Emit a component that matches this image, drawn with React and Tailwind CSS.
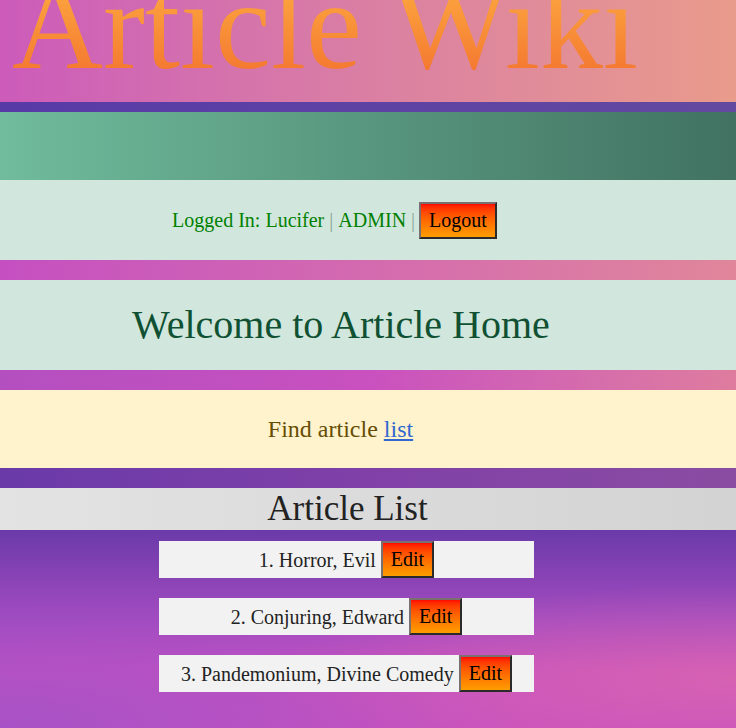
import React from "react";

const articles = [
  { id: 1, title: "Horror", author: "Evil" },
  { id: 2, title: "Conjuring", author: "Edward" },
  { id: 3, title: "Pandemonium", author: "Divine Comedy" },
];

// red -> orange button with an outset-looking border
const btn =
  "bg-gradient-to-b from-[#ff0500] to-[#ff9d00] text-black text-[20px] leading-[23px] px-[8px] py-[5px] border-2 border-t-[#7a7070] border-l-[#7a7070] border-r-[#2a2a2a] border-b-[#2a2a2a]";

const App = () => {
  return (
    <div className="min-h-screen flex flex-col font-['Liberation_Serif','Times_New_Roman',serif]">
      {/* Header */}
      <header className="h-[102px] overflow-hidden bg-gradient-to-r from-[#cc5bba] via-[#da7fa3] to-[#e99b8b]">
        <h1 className="pl-[12px] pb-[34px] text-[126px] leading-[52px] font-normal bg-gradient-to-b from-[#fb9f3d] to-[#f2702e] bg-clip-text text-transparent whitespace-nowrap">
          Article Wiki
        </h1>
      </header>

      {/* Banner */}
      <div className="pt-[10px] bg-gradient-to-r from-[#583aa7] to-[#6449a0]">
        <div className="h-[68px] bg-gradient-to-r from-[#70bc9c] to-[#417262]" />
      </div>

      {/* User bar */}
      <div className="h-[80px] bg-[#d1e7dd] flex items-center justify-center pr-[67px] text-[20px]">
        <span className="text-[#008000]">Logged In: Lucifer</span>
        <span className="text-[#8aa596]">&nbsp;|&nbsp;</span>
        <span className="text-[#008000]">ADMIN</span>
        <span className="text-[#8aa596]">&nbsp;|</span>
        <button className={`${btn} ml-[4px]`}>Logout</button>
      </div>

      {/* Welcome */}
      <div className="pt-[20px] bg-gradient-to-r from-[#c54fc1] via-[#d46aaf] to-[#e0869a]">
        <div className="h-[90px] bg-[#d1e7dd] flex items-center justify-center pr-[54px]">
          <h2 className="text-[40px] text-[#0f5132]">Welcome to Article Home</h2>
        </div>
      </div>

      {/* Find */}
      <div className="pt-[20px] bg-gradient-to-r from-[#b44fc0] via-[#c950bf] to-[#de7c9e]">
        <div className="h-[78px] bg-[#fff3cd] flex items-center justify-center pr-[55px]">
          <p className="text-[24px] text-[#664d03]">
            Find article{" "}
            <a href="#" className="text-[#3068d0] underline">
              list
            </a>
          </p>
        </div>
      </div>

      {/* Article list heading */}
      <div className="pt-[20px] bg-gradient-to-r from-[#6a3aa9] via-[#8040a8] to-[#8a4ca2]">
        <div className="h-[42px] bg-gradient-to-r from-[#e3e3e3] to-[#d3d3d3] flex items-center justify-center pr-[41px]">
          <h2 className="text-[35px] leading-[40px] text-[#222]">Article List</h2>
        </div>
      </div>

      {/* Article items */}
      <div className="flex-1 pt-[11px] bg-[radial-gradient(ellipse_at_100%_75%,rgba(228,112,168,0.55),transparent_45%),radial-gradient(ellipse_at_0%_100%,rgba(140,84,205,0.55),transparent_50%),linear-gradient(180deg,#6b3aa9_0%,#a34bc0_45%,#c450c0_70%,#c851bf_100%)]">
        <ul className="ml-[159px] w-[375px] flex flex-col gap-[20px]">
          {articles.map((a) => (
            <li
              key={a.id}
              className="h-[37px] bg-[#f2f2f2] flex items-center justify-center gap-[5px] text-[20px] text-[#222]"
            >
              <span>
                {a.id}. {a.title}, {a.author}
              </span>
              <button className={btn}>Edit</button>
            </li>
          ))}
        </ul>
      </div>
    </div>
  );
};

export default App;
